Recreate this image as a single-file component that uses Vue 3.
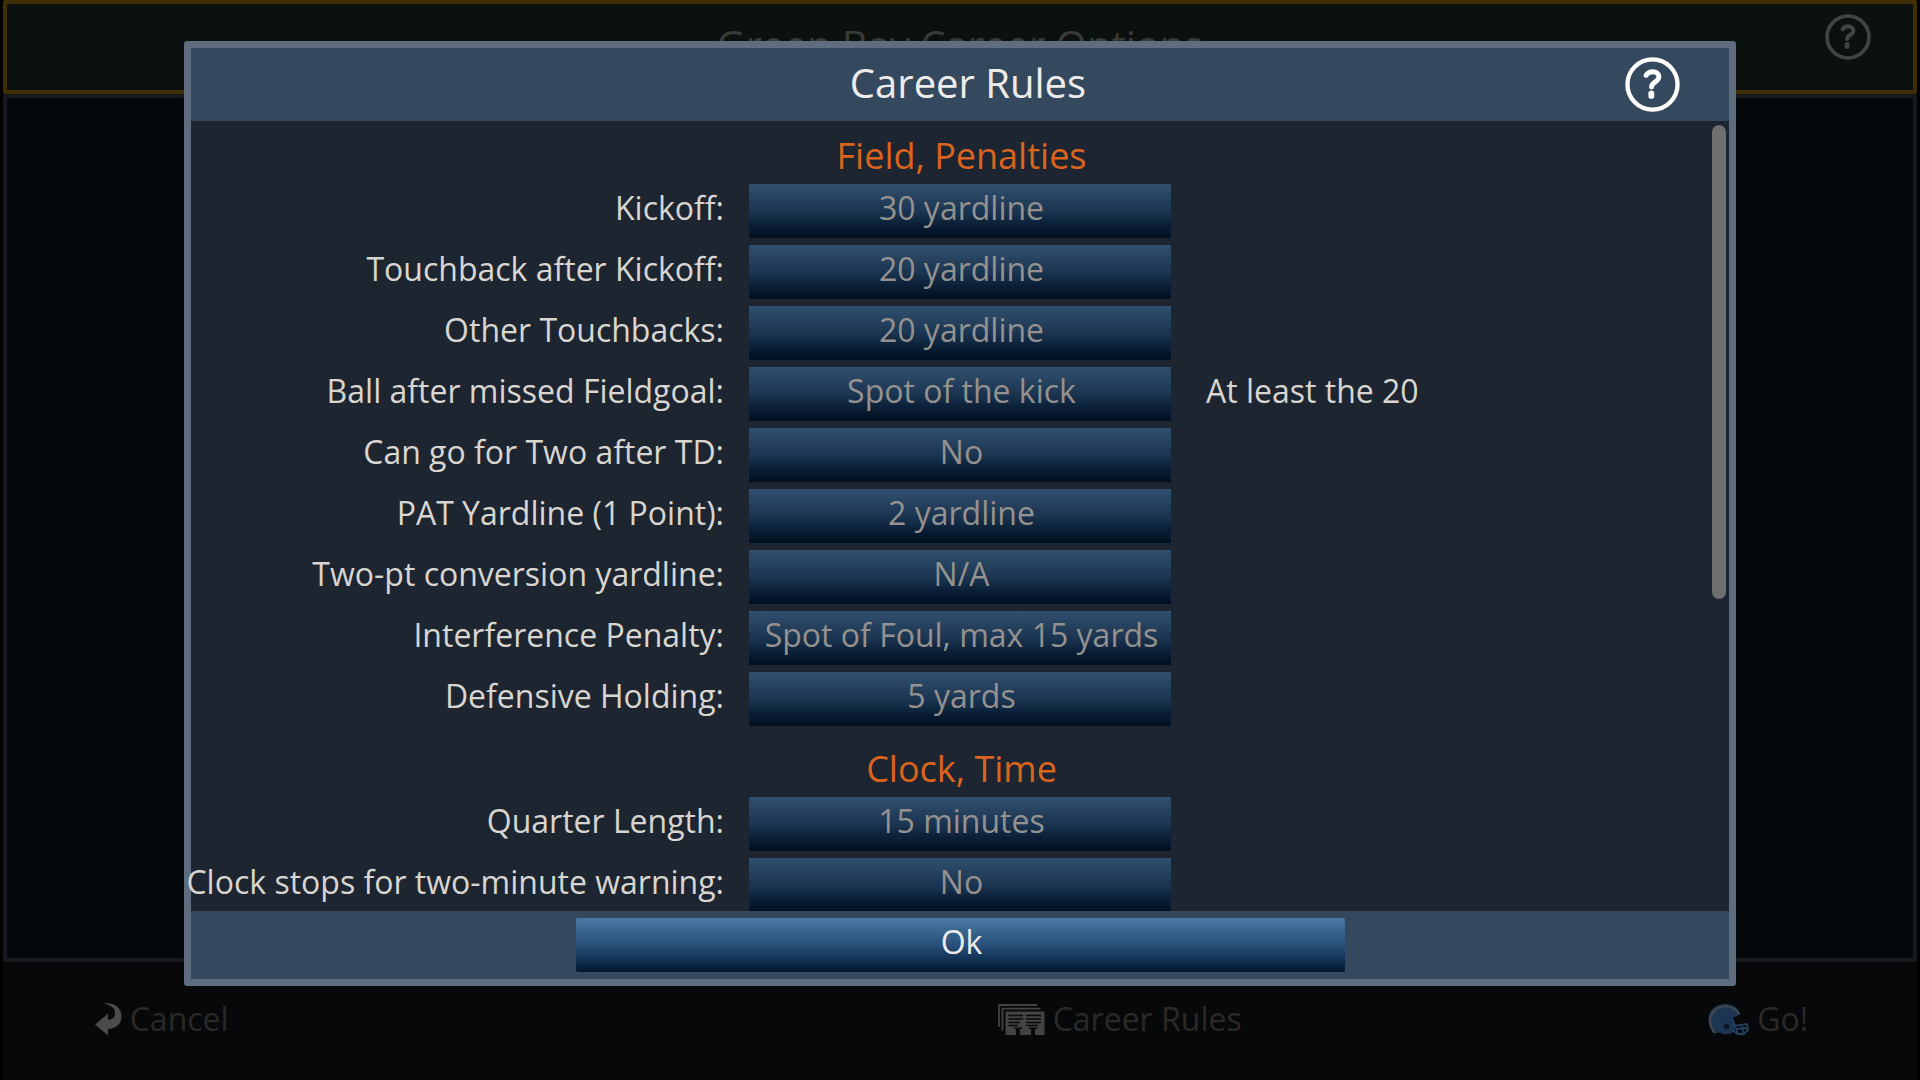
<script setup>
const sections = [
  {
    title: 'Field, Penalties',
    rules: [
      { id: 'kickoff', label: 'Kickoff:', value: '30 yardline' },
      { id: 'touchback', label: 'Touchback after Kickoff:', value: '20 yardline' },
      { id: 'other-touchbacks', label: 'Other Touchbacks:', value: '20 yardline' },
      { id: 'missed-fg', label: 'Ball after missed Fieldgoal:', value: 'Spot of the kick', note: 'At least the 20' },
      { id: 'go-for-two', label: 'Can go for Two after TD:', value: 'No' },
      { id: 'pat', label: 'PAT Yardline (1 Point):', value: '2 yardline' },
      { id: 'two-point', label: 'Two-pt conversion yardline:', value: 'N/A' },
      { id: 'interference', label: 'Interference Penalty:', value: 'Spot of Foul, max 15 yards' },
      { id: 'holding', label: 'Defensive Holding:', value: '5 yards' },
    ],
  },
  {
    title: 'Clock, Time',
    rules: [
      { id: 'quarter', label: 'Quarter Length:', value: '15 minutes' },
      { id: 'two-minute', label: 'Clock stops for two-minute warning:', value: 'No' },
    ],
  },
]
</script>

<template>
  <div class="screen">
    <header class="page-head">
      <h1 class="page-title">Green Bay Career Options</h1>
      <button class="help help-small" type="button" aria-label="Help">
        <svg viewBox="0 0 56 56" fill="none" stroke="currentColor" stroke-linecap="round">
          <circle cx="28" cy="28" r="25.5" stroke-width="4.4" />
          <path d="M21.5 18.6C23 16 25.5 15 28.3 15C32 15 34.5 17.2 34.5 20.4C34.5 25.4 27 25.2 27 30.5" stroke-width="5" />
          <path d="M26.8 37v2.6" stroke-width="6" />
        </svg>
      </button>
    </header>
    <main class="page-panel"></main>
    <nav class="page-bar">
      <button class="bar-item" type="button">
        <svg class="icon-back" viewBox="0 0 27 33" fill="currentColor">
          <path d="M8 .8C18-1.5 26.5 4 26.5 13.5C26.5 20.5 21.5 25.5 13 26V32.6L0 21.4L13 10.8V16.8C18.5 16.5 20.6 13 20 9C19.3 4.5 14.5 1.5 8 .8Z" />
        </svg>
        <span>Cancel</span>
      </button>
      <span class="bar-item"></span>
      <span class="bar-item"></span>
      <button class="bar-item" type="button">
        <svg class="icon-rules" viewBox="0 0 47 31">
          <path d="M1 23V1H39M4.5 26.5V4.7H42.5" fill="none" stroke="currentColor" stroke-width="1.8" />
          <path d="M7.5 7.5H46.5V31H37V25H39V23.5H31V25H33V31H22V25H24V23.5H16V25H18V31H7.5Z" fill="currentColor" />
          <path d="M10.5 11.5H25M10.5 15H25M10.5 18.5H22M10.5 21.5H20M28 11.5H43M28 15H43M28 18.5H43M28 21.5H40" stroke="#07080a" stroke-width="1.3" />
        </svg>
        <span>Career Rules</span>
      </button>
      <span class="bar-item"></span>
      <button class="bar-item" type="button">
        <svg class="icon-helmet" viewBox="0 0 41 31" fill="none">
          <path d="M6 29.5C-1 22-2 11 5 4.5C12-2 26-1.5 30.5 6.5L32 10.5L24.5 14L27 26C24 31 17 31.5 12 28.5Z" fill="#1b3553" />
          <path d="M6.5 29C.5 21 1 11 7 6C13 .5 26 1 31.5 10" stroke="#494b4d" stroke-width="1.8" />
          <circle cx="18.5" cy="22.5" r="2.8" fill="#0b1420" />
          <path d="M24.5 15L30 30M25 22L39 20L40 26L36 30H30L24 26M28 25L39 24M34 21L35.5 29.5" stroke="#24405f" stroke-width="1.8" />
        </svg>
        <span>Go!</span>
      </button>
    </nav>

    <div class="overlay">
      <section class="dialog" role="dialog" aria-modal="true" aria-labelledby="dialog-title">
        <header class="dialog-head">
          <h2 id="dialog-title" class="dialog-title">Career Rules</h2>
          <button class="help help-large" type="button" aria-label="Help">
            <svg viewBox="0 0 56 56" fill="none" stroke="currentColor" stroke-linecap="round">
              <circle cx="28" cy="28" r="25.5" stroke-width="4.4" />
              <path d="M21.5 18.6C23 16 25.5 15 28.3 15C32 15 34.5 17.2 34.5 20.4C34.5 25.4 27 25.2 27 30.5" stroke-width="5" />
              <path d="M26.8 37v2.6" stroke-width="6" />
            </svg>
          </button>
        </header>

        <div class="dialog-body">
          <section v-for="section in sections" :key="section.title" class="group">
            <h3 class="group-title">{{ section.title }}</h3>
            <div class="rules">
              <div v-for="rule in section.rules" :key="rule.id" class="rule">
                <label class="rule-label" :for="rule.id">{{ rule.label }}</label>
                <button :id="rule.id" class="rule-value" type="button" disabled>{{ rule.value }}</button>
                <span v-if="rule.note" class="rule-note">{{ rule.note }}</span>
              </div>
            </div>
          </section>
          <div class="scroll-thumb"></div>
        </div>

        <footer class="dialog-foot">
          <button class="ok" type="button">Ok</button>
        </footer>
      </section>
    </div>
  </div>
</template>

<style>
body {
  margin: 0;
  background: #000;
}
</style>

<style scoped>
* {
  box-sizing: border-box;
}

.screen {
  position: relative;
  display: flex;
  flex-direction: column;
  height: 100vh;
  padding: 0 3px;
  overflow: hidden;
  background: #000;
  font-family: "Open Sans", "Noto Sans", sans-serif;
  font-size: 32px;
  line-height: 44px;
}

h1,
h2,
h3 {
  margin: 0;
  font-weight: 400;
}

button {
  margin: 0;
  padding: 0;
  border: 0;
  background: none;
  color: inherit;
  font: inherit;
}

svg {
  display: block;
}

.page-head {
  display: grid;
  grid-template-columns: 1fr auto 1fr;
  align-items: center;
  height: 94px;
  padding: 0 42px 4px;
  border: 4px solid #3f2d04;
  border-radius: 2px;
  background: #0a110e;
  color: #3a3a39;
}

.page-title {
  grid-column: 2;
  font-size: 40px;
  line-height: 56px;
}

.help-small {
  justify-self: end;
  align-self: start;
  width: 46px;
  height: 46px;
  margin-top: 10px;
  color: #434544;
}

.page-panel {
  flex: 1;
  border: 4px solid #16191d;
  border-radius: 2px;
  background: #05080b;
}

.page-bar {
  display: grid;
  grid-template-columns: repeat(6, 1fr);
  gap: 2px;
  height: 118px;
  background: #050607;
}

.bar-item {
  display: flex;
  align-items: center;
  justify-content: center;
  gap: 8px;
  padding-bottom: 4px;
  background: #07080a;
  color: #2b2928;
}

.icon-back {
  width: 27px;
  height: 33px;
  color: #4b4b4b;
}

.icon-rules {
  width: 47px;
  height: 31px;
  color: #434343;
}

.icon-helmet {
  width: 41px;
  height: 31px;
}

.overlay {
  position: absolute;
  inset: 0;
  display: flex;
  padding: 41px 184px 94px;
}

.dialog {
  display: flex;
  flex: 1;
  flex-direction: column;
  min-width: 0;
  border: 7px solid #5f6e7f;
  border-radius: 3px;
  background: #1d2630;
}

.dialog-head {
  display: grid;
  grid-template-columns: 1fr auto 1fr;
  align-items: center;
  height: 73px;
  padding: 0 49px 0 65px;
  background: #35495e;
  color: #eeeceb;
}

.dialog-title {
  grid-column: 2;
  padding-bottom: 4px;
  font-size: 40px;
  line-height: 56px;
}

.help-large {
  justify-self: end;
  width: 55px;
  height: 55px;
  color: #fff;
}

.dialog-body {
  position: relative;
  flex: 1;
  min-height: 0;
  padding-top: 7px;
  overflow-x: visible;
  overflow-y: clip;
}

.group + .group {
  margin-top: 15px;
}

.group-title {
  padding-left: 3px;
  color: #da641e;
  font-size: 36px;
  line-height: 56px;
  text-align: center;
}

.rules {
  display: flex;
  flex-direction: column;
  gap: 7px;
}

.rule {
  display: grid;
  grid-template-columns: 1fr 422px 1fr;
  height: 54px;
  color: #d9d5d0;
  white-space: nowrap;
}

.rule-label,
.rule-note {
  display: flex;
  min-width: 0;
  align-items: center;
  padding-bottom: 6px;
}

.rule-label {
  justify-content: flex-end;
  padding-right: 25px;
}

.rule-note {
  padding-left: 35px;
}

.rule-value {
  padding: 0 0 6px 3px;
  background: linear-gradient(#31506f, #1b3551 50%, #0b2038 75%, #010f1f);
  color: #94918e;
}

.scroll-thumb {
  position: absolute;
  top: 4px;
  right: 3px;
  width: 14px;
  height: 60%;
  border-radius: 7px;
  background: #6f6f6f;
}

.dialog-foot {
  display: flex;
  justify-content: center;
  height: 68px;
  padding: 7px 0;
  background: #35495e;
}

.ok {
  width: 50%;
  padding: 0 0 6px 3px;
  border-radius: 2px;
  background: linear-gradient(#4a79a5, #285079 50%, #133456 75%, #021830);
  color: #eeeceb;
}
</style>
